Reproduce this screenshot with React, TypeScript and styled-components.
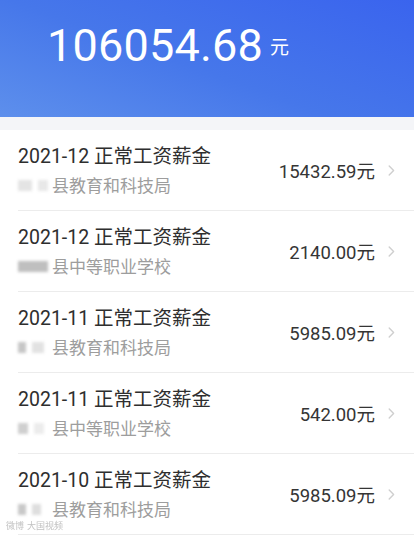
import React from "react";
import styled, { createGlobalStyle } from "styled-components";

const Global = createGlobalStyle`
  html, body { margin: 0; padding: 0; background: #ffffff; }
  body { font-family: Roboto, "Noto Sans CJK SC", sans-serif; overflow: hidden; }
`;

const Page = styled.div`
  width: 414px;
  height: 539px;
  position: relative;
  overflow: hidden;
  background: #ffffff;
`;

const Header = styled.header`
  height: 117px;
  box-sizing: border-box;
  padding: 20px 0 0 47px;
  background: linear-gradient(20deg, #5d8fec 0%, #4677ea 45%, #3a64ee 100%);
  color: #ffffff;
  display: flex;
  align-items: flex-start;
`;

const Total = styled.div`
  display: flex;
  align-items: center;
  gap: 7px;
`;

const TotalNumber = styled.span`
  font-family: Roboto, sans-serif;
  font-size: 45px;
  line-height: 52px;
  font-weight: 400;
  letter-spacing: 0.2px;
`;

const TotalUnit = styled.span`
  font-family: "Noto Sans CJK SC", sans-serif;
  font-size: 19px;
  line-height: 20px;
  margin-top: -1px;
`;

const Strip = styled.div`
  height: 13px;
  background: #f4f5f8;
`;

const List = styled.ul`
  list-style: none;
  margin: 0;
  padding: 0;
`;

const Row = styled.li`
  height: 81px;
  box-sizing: border-box;
  margin-left: 18px;
  border-bottom: 1px solid #ececec;
  display: flex;
  align-items: center;
  padding-right: 19px;
`;

const Info = styled.div`
  flex: 1;
  display: flex;
  flex-direction: column;
  gap: 3px;
  margin-top: 1px;
`;

const Title = styled.div`
  font-family: Roboto, "Noto Sans CJK SC", sans-serif;
  font-size: 19.5px;
  line-height: 26px;
  color: #2e2e2e;
  white-space: nowrap;
`;

const Sub = styled.div`
  display: flex;
  align-items: center;
  font-family: "Noto Sans CJK SC", sans-serif;
  font-size: 17px;
  line-height: 24px;
  color: #9d9d9d;
`;

const Mask = styled.span<{ $w: number }>`
  display: inline-flex;
  gap: 6px;
  width: ${(p) => p.$w}px;
  height: 14px;
  margin-right: 2px;
  align-items: center;
  filter: blur(1.5px);
`;

const Blot = styled.span<{ $w: number; $c: string }>`
  display: inline-block;
  width: ${(p) => p.$w}px;
  height: 11px;
  background: ${(p) => p.$c};
`;

const Amount = styled.div`
  font-family: Roboto, "Noto Sans CJK SC", sans-serif;
  font-size: 18.5px;
  color: #353535;
  margin-right: 13px;
  white-space: nowrap;
`;

const Chevron = () => (
  <svg width="7" height="11" viewBox="0 0 7 11" fill="none">
    <path d="M1.2 1 L5.6 5.5 L1.2 10" stroke="#cfcfcf" strokeWidth="1.4" strokeLinecap="round" strokeLinejoin="round" />
  </svg>
);

const Watermark = styled.div`
  position: absolute;
  left: 6px;
  bottom: 7px;
  font-family: "Noto Sans CJK SC", sans-serif;
  font-size: 9px;
  color: #c2c2c2;
  filter: blur(0.4px);
  display: flex;
  align-items: center;
  gap: 3px;
`;

type Item = {
  title: string;
  sub: string;
  amount: string;
  blots: { w: number; c: string }[];
};

const items: Item[] = [
  { title: "2021-12 正常工资薪金", sub: "县教育和科技局", amount: "15432.59元", blots: [{ w: 14, c: "#e4e4e4" }, { w: 10, c: "#e8e8e8" }] },
  { title: "2021-12 正常工资薪金", sub: "县中等职业学校", amount: "2140.00元", blots: [{ w: 30, c: "#bfbfbf" }] },
  { title: "2021-11 正常工资薪金", sub: "县教育和科技局", amount: "5985.09元", blots: [{ w: 8, c: "#c6c6c6" }, { w: 12, c: "#e2e2e2" }] },
  { title: "2021-11 正常工资薪金", sub: "县中等职业学校", amount: "542.00元", blots: [{ w: 10, c: "#cfcfcf" }, { w: 10, c: "#ececec" }] },
  { title: "2021-10 正常工资薪金", sub: "县教育和科技局", amount: "5985.09元", blots: [{ w: 8, c: "#c8c8c8" }, { w: 9, c: "#dedede" }] },
];

export default function App() {
  return (
    <Page>
      <Global />
      <Header>
        <Total>
          <TotalNumber>106054.68</TotalNumber>
          <TotalUnit>元</TotalUnit>
        </Total>
      </Header>
      <Strip />
      <List>
        {items.map((it, i) => (
          <Row key={i}>
            <Info>
              <Title>{it.title}</Title>
              <Sub>
                <Mask $w={32}>
                  {it.blots.map((b, j) => (
                    <Blot key={j} $w={b.w} $c={b.c} />
                  ))}
                </Mask>
                {it.sub}
              </Sub>
            </Info>
            <Amount>{it.amount}</Amount>
            <Chevron />
          </Row>
        ))}
      </List>
      <Watermark>
        <span>微博</span>
        <span>大国视频</span>
      </Watermark>
    </Page>
  );
}
